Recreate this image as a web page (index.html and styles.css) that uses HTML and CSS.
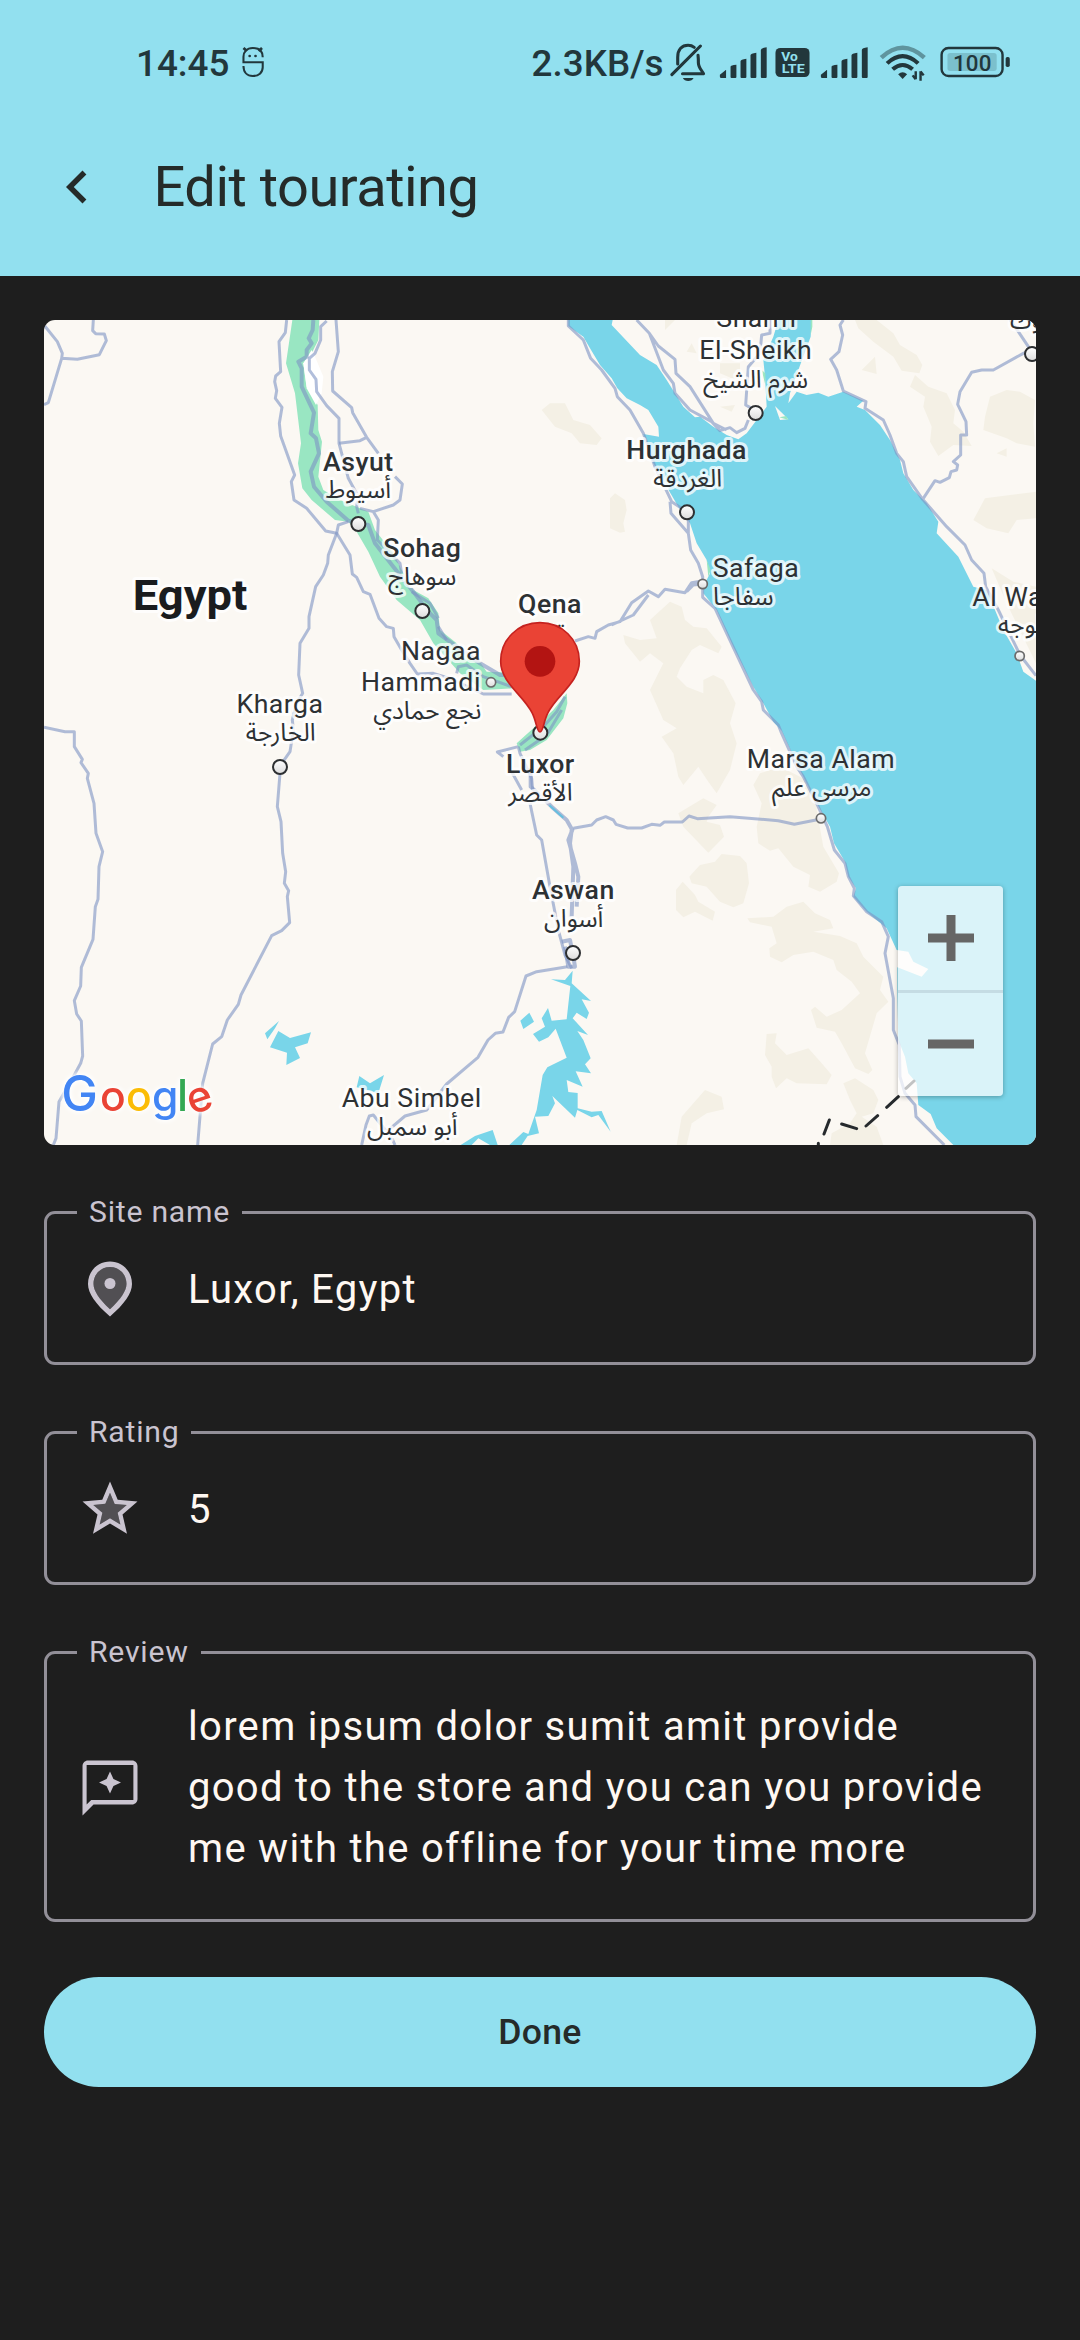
FILE: index.html
```html
<!DOCTYPE html>
<html lang="en">
<head>
<meta charset="utf-8">
<meta name="viewport" content="width=device-width, initial-scale=1">
<title>Edit tourating</title>
<link rel="stylesheet" href="styles.css">
</head>
<body>
<header class="header">
  <div class="status">
    <span class="status-time">14:45</span>
    <svg class="mascot" viewBox="700 60 80 140" width="27.5" height="46.67" preserveAspectRatio="none" fill="none" stroke="currentColor" stroke-width="6">
      <path d="M769 112C769 92 756 84 740 84C722 84 713 96 713 110V127H769V142C769 158 757 168 740 168C724 168 713 157 713 138"/>
      <path d="M713 84l10 9M767 84l-10 9" stroke-width="8"/>
      <circle cx="731" cy="108" r="4" fill="currentColor" stroke="none"/><circle cx="748" cy="108" r="4" fill="currentColor" stroke="none"/>
    </svg>
    <span class="status-speed">2.3KB/s</span>
    <svg viewBox="425 60 135 140" width="46.5" height="46.67" preserveAspectRatio="none" fill="none" stroke="currentColor" stroke-width="9" stroke-linecap="round" stroke-linejoin="round">
      <path d="M442 164L525 78"/>
      <path d="M459 132V112C459 88 472 76 489 76C496 76 502 78 507 82"/>
      <path d="M518 106C519 114 519 120 519 128C519 142 528 150 534 161H473"/>
      <path d="M474 174H505C501 186 478 186 474 174Z" fill="currentColor" stroke="none"/>
    </svg>
    <svg viewBox="560 60 170 140" width="58.5" height="46.67" preserveAspectRatio="none" fill="currentColor">
      <path d="M580 164L598 149V174H584Q580 174 580 170ZM611 140Q611 136 628 134V171Q628 174 625 174H614Q611 174 611 171ZM640 124Q640 118 657 116V171Q657 174 654 174H643Q640 174 640 171ZM669 106Q669 100 686 98V171Q686 174 683 174H672Q669 174 669 171ZM699 90Q699 84 716 82V171Q716 174 713 174H702Q699 174 699 171Z"/>
    </svg>
    <svg viewBox="730 60 125 140" width="43" height="46.67" preserveAspectRatio="none">
      <rect x="743" y="84" width="99" height="87" rx="14" fill="currentColor"/>
      <text class="volte" x="760" y="123" font-size="36" textLength="48" lengthAdjust="spacingAndGlyphs">Vo</text>
      <text class="volte" x="761" y="160" font-size="37" textLength="67" lengthAdjust="spacingAndGlyphs">LTE</text>
    </svg>
    <svg viewBox="560 60 170 140" width="58.5" height="46.67" preserveAspectRatio="none" fill="currentColor">
      <path d="M580 164L598 149V174H584Q580 174 580 170ZM611 140Q611 136 628 134V171Q628 174 625 174H614Q611 174 611 171ZM640 124Q640 118 657 116V171Q657 174 654 174H643Q640 174 640 171ZM669 106Q669 100 686 98V171Q686 174 683 174H672Q669 174 669 171ZM699 90Q699 84 716 82V171Q716 174 713 174H702Q699 174 699 171Z"/>
    </svg>
    <svg viewBox="1025 60 175 140" width="60.3" height="46.67" preserveAspectRatio="none" fill="none" stroke="currentColor" stroke-width="12">
      <path d="M1049 113Q1111 54 1174 113" stroke-width="13" opacity=".45"/>
      <path d="M1066 130Q1111 87 1156 130"/>
      <path d="M1082 148Q1111 122 1140 148"/>
      <path d="M1098 163Q1111 150 1124 163L1111 177Z" fill="currentColor" stroke="none"/>
      <path d="M1149 154V178M1140 166L1149 178M1163 182V154M1172 166L1163 154" stroke-width="7"/>
    </svg>
    <svg viewBox="1200 60 230 140" width="79.2" height="46.67" preserveAspectRatio="none">
      <rect x="1225" y="84" width="177" height="84" rx="20" fill="none" stroke="currentColor" stroke-width="7"/>
      <rect x="1242" y="99" width="143" height="54" rx="8" fill="#7bc0cd"/>
      <rect x="1411" y="111" width="12" height="30" rx="5" fill="currentColor"/>
      <text class="battery" x="1314" y="152" font-size="65" text-anchor="middle" textLength="112">100</text>
    </svg>
  </div>
  <div class="appbar">
    <svg class="back" viewBox="0 0 24 24" width="66" height="66" fill="currentColor"><path d="M15.41 7.41L14 6l-6 6 6 6 1.41-1.41L10.83 12z"/></svg>
    <h1 class="title">Edit tourating</h1>
  </div>
</header>

<main class="content">
  <div class="map">
    <svg class="map-canvas" viewBox="12 30 2976 2475" width="992" height="825">
      <defs>
        <linearGradient id="dotfill" x1="0" y1="0" x2="0" y2="1"><stop offset="0" stop-color="#fff"/><stop offset="1" stop-color="#dcdcdc"/></linearGradient>
        <g id="city"><circle r="21" fill="url(#dotfill)" stroke="#2d2f31" stroke-width="6"/></g>
        <g id="town"><circle r="14" fill="url(#dotfill)" stroke="#6b6b6b" stroke-width="5"/></g>
      </defs>

      <!-- desert relief -->
      <g class="relief" transform="translate(1500 0)">
        <path d="M5 300L30 280L75 280L100 330L150 345L185 385L170 405L120 400L95 370L45 350Z"/>
        <path d="M210 565L225 550L255 570L260 600L250 640L255 665L240 668L210 655Z"/>
        <path d="M945 30H1010L1060 70L1080 105L1130 135L1147 165L1138 190L1085 182L1060 140L1000 95L955 55Z"/>
        <path d="M1125 195L1165 230L1220 250L1245 300L1240 340L1270 365L1295 408L1240 405L1195 438L1170 395L1175 350L1150 290L1155 260L1110 230Z"/>
        <path d="M1350 260L1400 240L1440 245L1485 270L1480 340L1485 410L1430 400L1400 385L1330 360L1335 320Z"/>
        <path d="M1335 565L1410 555L1488 545V625L1430 630L1405 670L1340 655L1300 630Z"/>
        <path d="M1355 775L1420 815L1488 830V1060L1400 880Z"/>
        <path d="M965 180L1005 140L1010 192ZM1370 430L1400 415V440ZM375 30H405L375 60ZM440 125L455 100L470 130ZM540 160H600V215L540 190ZM540 290L585 285L575 305Z"/>
        <path d="M330 930L390 875L425 890L435 930L460 950L500 955L545 1010L535 1030L480 1005L455 1020L420 1075L410 1100L440 1130L490 1150V1110L520 1095L550 1110L587 1180L570 1240L590 1300L570 1380L530 1450L505 1415L475 1370L430 1425L415 1400L400 1330L365 1280L410 1255L370 1230L330 1140L370 1060L330 1030L300 1055L255 1000L250 975L300 990L350 985Z"/>
      </g>
      <g class="relief" transform="translate(1500 1260)">
        <path d="M660 130L720 110L800 150L830 220V240L850 350L897 430L890 455L840 485L805 470L810 435L760 410L715 355L690 362L655 340L650 290L665 220L640 165Z"/>
        <path d="M415 250L490 205L530 225L505 260L500 275L540 285L552 320L505 368L430 290Z"/>
        <path d="M448 440L480 405L525 395L545 372L600 378L620 400L627 460L610 520L580 532L540 515L500 470L455 460Z"/>
        <path d="M408 480L428 455L465 495L475 515L525 545L518 572L465 545L430 562L408 540Z"/>
        <path d="M622 565L700 560L740 530L790 515L825 550L870 570L880 595L820 605L900 618L950 640L970 680L1030 740L1020 780L1045 815L1010 850L975 970L997 1020L985 1032L945 1015L905 940L885 905L830 893L813 840L825 830L860 860L905 840L960 790L935 755L890 720L880 690L820 665L760 675L725 697L690 680L688 655L710 640L695 590L630 577Z"/>
        <path d="M680 912L710 910L705 940L740 975L805 955L845 1000L875 1035L860 1063L770 1060L740 1045L708 1075L695 1040V1010L675 975Z"/>
        <path d="M910 1060L945 1045L1000 1080L1015 1110L1000 1150L965 1160L1010 1190L1030 1245H870L875 1210L930 1180L950 1150L930 1110Z"/>
        <path d="M495 1080L545 1100L552 1138L500 1150L455 1180L440 1245H410L425 1160Z"/>
      </g>

      <!-- cultivated valley -->
      <path class="green" d="M757 30H838L835 90L815 130L790 160L800 230L833 285L835 360L846 395L835 500L850 540L900 570L985 605L1005 660L1060 730L1085 780L1120 840L1165 865L1195 910L1200 960L1250 1000L1290 1050L1320 1055L1340 1085L1420 1088L1420 1135L1330 1140L1260 1090L1180 1000L1140 930L1070 870L1020 800L985 725L950 665L925 635L885 630L815 570L787 535L774 460L783 400L765 250L738 160Z"/>
      <path class="green" d="M1580 1150L1582 1180L1570 1225L1520 1290L1470 1320L1440 1325L1430 1300L1480 1255L1540 1200Z"/>
      <path d="M790 160L815 120L825 140L850 200L845 250L828 285L800 235Z" fill="#fff"/>

      <!-- water -->
      <path class="water" transform="translate(1500 0)" d="M85 30V48L130 80L150 115L180 165L215 205L232 235L260 265L300 285L325 300L355 350L357 380L310 372L340 460L380 530L415 590L450 640L470 700L500 750L510 790L490 830V850L530 900L580 1010L640 1130L670 1180L700 1235L725 1262L765 1350L790 1400L830 1480L870 1550L882 1600L915 1655L925 1700L948 1735L940 1760L980 1805L1040 1855L1070 1920L1105 1925L1120 1955L1165 1977L1145 2000L1072 1972V2040L1075 2190L1095 2240L1105 2290L1130 2320L1135 2385L1172 2412L1190 2455L1240 2505H1488V1112L1450 1085L1430 1030L1390 960L1340 840L1300 830L1255 740L1190 670L1195 635L1160 580L1120 540L1090 490L1080 450L1050 390L1020 345L975 300L950 290L970 272L910 245L865 260L835 248L800 255L770 245L745 280L750 250L775 180L812 80L815 30H715L700 80L670 150L675 200L680 290L650 330L620 370L595 388L560 375L520 350L480 320L465 322L430 290L380 210L350 165L300 135L215 45L218 30Z"/>
      <path transform="translate(1500 0)" d="M705 288L745 328L720 330Z" fill="#fbf8f3"/>
      <path class="green" transform="translate(1500 0)" d="M812 30V75L817 50V30ZM718 322L738 318L746 330ZM500 750L512 780L505 800ZM665 180L676 190V225Z"/>
      <g class="water">
        <path transform="translate(1200 1860)" d="M398 122L395 160L453 213L425 208L447 248L440 267L410 248L398 265L444 315L412 303L430 330L452 385L435 403L453 430L407 424L428 470L380 450L385 486L413 489V535L455 545L485 543L512 605L475 555L455 562L412 540L405 563L337 498L345 520L325 558L285 560L297 610L263 618L245 645H208L250 606L265 612L290 540L308 435L322 412L380 383L347 296L325 322L297 335L279 312L315 290L305 265L324 234L335 272L380 268L391 168L333 148L375 150Z"/>
        <path transform="translate(1200 1860)" d="M268 248L282 275L250 297L241 272ZM62 645L105 618L158 600L173 645H150L115 625L95 645Z"/>
        <path transform="translate(0 1260)" d="M717 873L705 895L682 928L675 910ZM715 903L750 924L813 907L803 940L765 952L780 984L739 1005L741 968L690 952ZM958 1038L990 1060L1032 1035L1015 1090L950 1072Z"/>
      </g>

      <!-- roads -->
      <g class="road">
        <path d="M12 45L52 95L67 130L65 145L25 278L12 284M65 145L112 148L178 134L199 92L193 72L167 71L158 62L160 30"/>
        <path d="M740 30L736 68L717 95L722 185L707 198L704 215L710 242L706 265L726 292L718 340L722 378L764 495L754 515L762 570L800 595L857 663L890 670L930 735L937 792L950 802L970 845L990 853L1017 925L1040 950L1060 955L1062 980L1085 1020L1110 1060L1132 1092L1180 1090L1230 1105L1330 1152H1415"/>
        <path d="M820 30L818 60L806 85L815 100L800 120V140L775 155L785 175V230L822 308L812 370L828 385L837 430L812 485L822 530L860 575L925 632L985 645L1005 700L1060 770L1120 845L1165 905L1190 930L1195 970L1250 1010L1320 1060L1380 1095H1420" class="valley"/>
        <path d="M860 33L842 50V90L825 130L808 145V180L828 208L830 245L860 287L897 325V400L925 505L955 560L950 590L955 610"/>
        <path d="M888 30L895 125L877 185L878 243L935 293L938 308L980 382L1015 430M897 400L960 392L980 382M1065 500L1087 522L1080 570L1060 585L1000 605L960 595M1000 605L1015 630L1012 690L1080 760L1085 790M890 670L895 645L925 635"/>
        <path d="M890 670L865 735L863 760L850 795L827 830L807 920V955L780 1000L776 1095L788 1150L770 1180L757 1230L760 1260L750 1325L722 1365L712 1490L723 1535L728 1630L737 1685L733 1720L746 1742L742 1760L749 1838L725 1862L695 1877L603 2055L595 2083L562 2130L545 2180L518 2202L488 2320L473 2505"/>
        <path d="M1115 845L1170 880L1195 925M1195 950L1220 990M1250 1090L1255 1070L1280 1065L1330 1100L1415 1130"/>
        <path transform="translate(0 1260)" d="M12 -8L75 5H103V50L127 88L123 98L145 130L142 145L162 220L168 310L188 365L177 410L174 508L166 530L159 628L124 712L122 768L103 812L110 852L124 873L128 978L122 1000L100 1040L57 1115L48 1225L40 1245"/>
        <path d="M1582 1970L1490 1985L1458 1998L1424 2105L1406 2122L1389 2166L1366 2170L1344 2190L1314 2242L1220 2322L1160 2400L1095 2418L1040 2465L1000 2415L988 2418L978 2445L965 2505M1045 2460L1065 2505"/>
        <path d="M1435 1310L1372 1326L1390 1340M1435 1310L1440 1330L1475 1405L1478 1440M1415 1385L1445 1440M1470 1480L1490 1575L1505 1590L1530 1730L1555 1860L1575 1935L1595 1975"/>
        <path d="M1440 1305L1510 1250L1550 1205L1575 1160M1455 1320L1520 1275L1565 1200"/>
        <path class="valley" d="M1472 1375V1430L1535 1490L1580 1530L1597 1560L1585 1590L1605 1660L1615 1700L1610 1790M1595 1560L1590 1600L1600 1670L1595 1820M1565 1895L1590 1890L1600 1940L1605 1970H1585L1575 1910"/>
      </g>
      <g class="road" transform="translate(1500 0)">
        <path d="M85 30V48L130 90L152 145L185 180L225 235L232 260L270 300L310 370L345 470L395 575L440 605M390 575L393 610L445 670V610M445 670L452 720L475 760L488 800V862L525 895L640 1140L665 1175L670 1200L715 1245L725 1270L770 1370L790 1400L830 1480L862 1550L883 1620L915 1660L925 1700L943 1735L940 1757L980 1805L1025 1835L1045 1880L1035 1930L1060 2065V2160L1078 2205L1080 2300L1095 2350L1125 2385L1128 2420L1213 2505"/>
        <path d="M290 30L328 70L370 180L400 220L405 250L450 300L515 335L540 362L570 353L590 368L615 355L625 330M328 70L355 108L405 148L408 190L450 230L520 340L560 360M690 30V70L665 75L660 130L625 170L617 285L635 295"/>
        <path d="M910 30L900 45L908 75L897 125L872 148L890 180L910 243L978 275L975 295L1030 330L1050 375L1070 430L1090 455L1100 500L1148 568L1185 512L1200 517L1228 503L1233 485L1250 480L1253 465L1240 455L1262 435V375H1280L1278 335L1253 283L1260 245L1295 187L1325 180H1360L1450 130L1475 125L1435 65L1410 30M1148 568L1220 650L1275 705L1295 750L1332 790L1337 830L1375 900L1440 1035L1488 1097"/>
        <path d="M490 812L455 818L435 848L375 838L355 860L325 843L275 878L240 935L205 945L170 965L165 985L145 980L105 993M325 855L280 915L215 945M488 822L460 825L440 845"/>
        <path d="M100 1555L155 1545L170 1530L197 1520L220 1530L228 1543L263 1554H305L335 1543L360 1546L373 1536H427L447 1518L472 1526L570 1520L715 1532L763 1543L843 1527"/>
      </g>
      <path d="M1528 1486L1570 1523" stroke="#65bfdf" stroke-width="6"/>
      <path d="M2335 2505V2500M2352 2472L2368 2430M2405 2442L2450 2456M2478 2448L2513 2417M2540 2392L2575 2360M2598 2335L2622 2313" stroke="#262a2d" stroke-width="9" stroke-linecap="round" fill="none"/>

      <!-- places -->
      <g class="labels">
        <text class="country" x="450" y="900" textLength="344" lengthAdjust="spacingAndGlyphs">Egypt</text>
        <text class="major" x="955" y="482">Asyut</text><text class="ar" x="955" y="565">أسيوط</text>
        <text class="major" x="1147" y="742">Sohag</text><text class="ar" x="1147" y="825">سوهاج</text>
        <text class="major" x="1530" y="910">Qena</text><text class="ar" x="1540" y="996">قنا</text>
        <text class="minor" x="1203" y="1049">Nagaa</text><text class="minor" x="1143" y="1144">Hammadi</text><text class="ar" x="1162" y="1228">نجع حمادي</text>
        <text class="minor" x="720" y="1209">Kharga</text><text class="ar" x="722" y="1292">الخارجة</text>
        <text class="major" x="1501" y="1388">Luxor</text><text class="ar" x="1501" y="1472">الأقصر</text>
        <text class="major" x="1600" y="1768">Aswan</text><text class="ar" x="1601" y="1852">أسوان</text>
        <text class="minor" x="1115" y="2392">Abu Simbel</text><text class="ar" x="1117" y="2475">أبو سمبل</text>
        <text class="minor" x="2149" y="51">Sharm</text><text class="minor" x="2147" y="148">El-Sheikh</text><text class="ar" x="2147" y="233">شرم الشيخ</text>
        <text class="major" x="1940" y="446">Hurghada</text><text class="ar" x="1943" y="530">الغردقة</text>
        <text class="minor" x="2148" y="802">Safaga</text><text class="ar" x="2110" y="886">سفاجا</text>
        <text class="minor" x="2343" y="1374">Marsa Alam</text><text class="ar" x="2345" y="1457">مرسى علم</text>
        <text class="minor" x="2936" y="887">Al Wajh</text><text class="ar" x="2950" y="970">الوجه</text>
        <text class="ar" x="2984" y="55">تبوك</text>
      </g>
      <use href="#city" x="955" y="642"/><use href="#city" x="1147" y="903"/><use href="#city" x="720" y="1371"/><use href="#city" x="1501" y="1268"/><use href="#city" x="1599" y="1929"/><use href="#city" x="2147" y="309"/><use href="#city" x="1941" y="607"/><use href="#city" x="2976" y="132"/>
      <use href="#town" x="1353" y="1117"/><use href="#town" x="1988" y="822"/><use href="#town" x="2343" y="1525"/><use href="#town" x="2939" y="1038"/>

      <path d="M1500 1266C1490 1266 1490 1235 1476 1208C1450 1155 1382 1118 1382 1054C1382 988 1434 938 1500 938S1618 988 1618 1054C1618 1118 1550 1155 1524 1208C1510 1235 1510 1266 1500 1266Z" fill="#ea4335" stroke="#c5221f" stroke-width="5"/>
      <circle cx="1500" cy="1054" r="46" fill="#b31412"/>

      <g class="logo">
        <text x="64" y="2403" font-size="147" fill="#4285f4">G</text>
        <text x="180" y="2404" font-size="128" fill="#ea4335">o</text>
        <text x="258" y="2404" font-size="128" fill="#fbbc05">o</text>
        <text x="336" y="2404" font-size="128" fill="#4285f4">g</text>
        <text x="411" y="2403" font-size="132" fill="#34a853">l</text>
        <text x="442" y="2404" font-size="128" fill="#ea4335" transform="rotate(-18 480 2370)">e</text>
      </g>
    </svg>
    <div class="zoom">
      <button class="zoom-btn" aria-label="Zoom in"><svg viewBox="0 0 46 46" width="46" height="46"><path d="M18.5 0h9v18.5H46v9H27.500V46h-9V27.500H0v-9h18.500z" fill="#666"/></svg></button>
      <button class="zoom-btn" aria-label="Zoom out"><svg viewBox="0 0 46 46" width="46" height="46"><path d="M0 18.500h46v9H0z" fill="#666"/></svg></button>
    </div>
  </div>

  <form class="form">
    <fieldset class="field">
      <legend class="label">Site name</legend>
      <svg class="icon" viewBox="0 0 24 24"><path opacity=".3" d="M18 10.200C18 6.570 15.350 4 12 4s-6 2.570-6 6.200c0 2.340 1.950 5.440 6 9.140 4.050-3.700 6-6.800 6-9.140z"/><path fill-rule="evenodd" d="M12 2c4.200 0 8 3.220 8 8.200 0 3.320-2.670 7.250-8 11.800-5.330-4.550-8-8.480-8-11.800C4 5.220 7.800 2 12 2zm6 8.200C18 6.570 15.350 4 12 4s-6 2.570-6 6.200c0 2.340 1.950 5.440 6 9.140 4.050-3.700 6-6.800 6-9.140z"/><circle cx="12" cy="10" r="2"/></svg>
      <p class="value">Luxor, Egypt</p>
    </fieldset>
    <fieldset class="field">
      <legend class="label">Rating</legend>
      <svg class="icon" viewBox="0 0 24 24"><path opacity=".3" d="M12 15.400l-3.760 2.270 1-4.280-3.320-2.880 4.380-.38L12 6.100l1.710 4.040 4.380.38-3.320 2.880 1 4.280z"/><path fill-rule="evenodd" d="M22 9.240l-7.190-.62L12 2 9.190 8.630 2 9.240l5.460 4.730L5.820 21 12 17.270 18.180 21l-1.630-7.030L22 9.240zM12 15.400l-3.760 2.270 1-4.280-3.320-2.880 4.380-.38L12 6.100l1.710 4.040 4.380.38-3.320 2.880 1 4.280L12 15.400z"/></svg>
      <p class="value">5</p>
    </fieldset>
    <fieldset class="field field-tall">
      <legend class="label">Review</legend>
      <svg class="icon" viewBox="0 0 24 24"><path fill-rule="evenodd" d="M20 2H4c-1.100 0-1.990.9-1.990 2L2 22l4-4h14c1.100 0 2-.9 2-2V4c0-1.100-.9-2-2-2zm.5 14.400H5.170L3.500 18V3.600h17v12.800z"/><path d="M12 14l1.250-2.750L16 10l-2.750-1.250L12 6l-1.250 2.750L8 10l2.750 1.250z"/></svg>
      <p class="value">lorem ipsum dolor sumit amit provide<br>good to the store and you can you provide<br>me with the offline for your time more</p>
    </fieldset>
    <button class="done" type="button">Done</button>
  </form>
</main>
</body>
</html>
```
FILE: styles.css
```css
* { box-sizing: border-box; }
body {
  margin: 0;
  width: 1080px;
  min-height: 2340px;
  background: #1e1e1e;
  font-family: Roboto, "Noto Sans", sans-serif;
  color: #fff8f2;
}
svg { display: block; flex: none; }
.header { height: 276px; background: #92e0ef; color: #252b29; }
.status {
  display: flex;
  align-items: center;
  height: 100px;
  padding: 27px 67.6px 0 136px;
  color: #22373c;
  font-size: 36.8px;
  font-weight: 500;
}
.mascot { margin-left: 10px; }
.status-speed { margin-left: auto; margin-right: 3px; }
.volte { font-family: Roboto, sans-serif; font-weight: 700; fill: #92e0ef; }
.battery { font-family: Roboto, sans-serif; font-weight: 500; fill: #22373c; }
.appbar { display: flex; align-items: center; gap: 43.500px; height: 174px; padding-left: 44px; }
.title { margin: 0; font-size: 56px; font-weight: 400; line-height: 70px; letter-spacing: -.5px; }

.content { padding: 44px 44px 0; }
.map { position: relative; height: 825px; border-radius: 11px; overflow: hidden; background: #fbf8f3; }
.relief { fill: #f4f0e5; }
.green { fill: #99e6c2; }
.water { fill: #79d5e9; }
.road { fill: none; stroke: #7d92c3; stroke-opacity: .6; stroke-width: 9; stroke-linejoin: round; }
.valley { stroke-width: 12; }
.labels {
  text-anchor: middle;
  font-family: Roboto, "DejaVu Sans", sans-serif;
  font-size: 80px;
  letter-spacing: 1.5px;
  fill: #2d3134;
  stroke: #fff;
  stroke-opacity: .75;
  stroke-width: 18px;
  stroke-linejoin: round;
  paint-order: stroke;
}
.country { font-size: 128px; font-weight: 700; letter-spacing: 0; fill: #1a1c1e; }
.major { font-weight: 500; }
.ar { font-family: "Noto Sans Arabic", "DejaVu Sans", sans-serif; font-size: 74px; letter-spacing: 0; }
.logo { font-family: Inter, sans-serif; font-weight: 500; filter: drop-shadow(0 0 8px #fff) drop-shadow(0 0 8px #fff); }
.zoom {
  position: absolute;
  right: 33px;
  bottom: 49px;
  display: flex;
  flex-direction: column;
  width: 105px;
  height: 210px;
  border-radius: 4px;
  background: rgba(255, 255, 255, .72);
  box-shadow: 0 1px 5px rgba(0, 0, 0, .3);
}
.zoom-btn { display: grid; place-items: center; flex: 1; padding: 0; border: 0; background: none; }
.zoom-btn + .zoom-btn { border-top: 3px solid rgba(150, 170, 180, .3); }

.form { display: flex; flex-direction: column; gap: 46px; margin-top: 46px; }
.field {
  display: flex;
  align-items: center;
  gap: 45px;
  min-width: 0;
  height: 174px;
  margin: 0;
  padding: 22px 0 0 30px;
  border: 3px solid #928f98;
  border-radius: 11px;
}
.field-tall { height: 291px; }
.label {
  height: 43px;
  padding: 0 12px;
  font-size: 30.2px;
  line-height: 42px;
  letter-spacing: .75px;
  color: #cac4d0;
}
.icon { width: 66px; height: 66px; fill: #cac4d0; }
.value { margin: 0; font-size: 40px; line-height: 61px; letter-spacing: 1.3px; white-space: nowrap; }
.done {
  height: 110px;
  margin-top: 9px;
  border: 0;
  border-radius: 55px;
  background: #92e0ef;
  color: #252b29;
  font: 500 35.6px Roboto, sans-serif;
  letter-spacing: .25px;
}
```
